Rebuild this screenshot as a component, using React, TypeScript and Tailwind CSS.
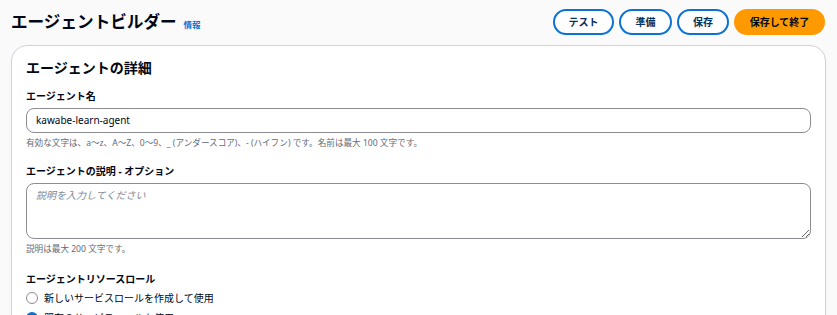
import React from "react";

export default function App() {
  return (
    <div
      className="w-[837px] h-[315px] overflow-hidden bg-[#fafafa] text-[#000716]"
      style={{ fontFamily: '"Noto Sans", "Noto Sans CJK JP", sans-serif' }}
    >
      <div className="flex items-center justify-between pl-[11px] pr-[12px] pt-[6px] h-[38px]">
        <div className="flex items-baseline gap-[7px]">
          <h1 className="text-[16.6px] font-bold leading-[26px]">エージェントビルダー</h1>
          <span className="text-[8.5px] font-bold text-[#0972d3]">情報</span>
        </div>
        <div className="flex items-center gap-[5px]">
          <button className="h-[26px] w-[61px] rounded-full border-2 border-[#0972d3] bg-white text-[10px] font-bold text-[#033160]">テスト</button>
          <button className="h-[26px] w-[53px] rounded-full border-2 border-[#0972d3] bg-white text-[10px] font-bold text-[#033160]">準備</button>
          <button className="h-[26px] w-[52px] rounded-full border-2 border-[#0972d3] bg-white text-[10px] font-bold text-[#033160]">保存</button>
          <button className="h-[26px] w-[91px] rounded-full bg-[#ff9900] text-[10px] font-bold text-[#000716]">保存して終了</button>
        </div>
      </div>
      <div className="mx-[11px] mt-[7px] rounded-[16px] border border-[#d1d5db] bg-white px-[14px] pt-[12px] pb-4 shadow-[0_1px_2px_rgba(0,7,22,0.08)]">
        <h2 className="text-[14px] font-bold leading-[20px]">エージェントの詳細</h2>
        <div className="mt-[10px]">
          <div className="text-[10px] font-bold leading-[16px]">エージェント名</div>
          <div className="mt-[4px] flex h-[25px] items-center rounded-[8px] border border-[#8c8c94] px-[9px] text-[10px]">
            kawabe-learn-agent
          </div>
          <div className="mt-[3px] text-[8.6px] leading-[14px] text-[#5f6b7a]">
            有効な文字は、a〜z、A〜Z、0〜9、_ (アンダースコア)、- (ハイフン) です。名前は最大 100 文字です。
          </div>
        </div>
        <div className="mt-[13px]">
          <div className="text-[10px] font-bold leading-[16px]">エージェントの説明 - オプション</div>
          <textarea
            className="mt-[4px] block h-[56px] w-full resize-y rounded-[8px] border border-[#8c8c94] px-[9px] py-[3px] text-[10px] leading-[16px] italic placeholder:text-[#7d8998] outline-none"
            placeholder="説明を入力してください"
          />
          <div className="mt-[3px] text-[8.6px] leading-[14px] text-[#5f6b7a]">説明は最大 200 文字です。</div>
        </div>
        <div className="mt-[15px]">
          <div className="text-[10px] font-bold leading-[16px]">エージェントリソースロール</div>
          <div className="mt-[3px] flex items-center gap-[6px] text-[10px] leading-[16px]">
            <span className="h-[12px] w-[12px] rounded-full border-[1.5px] border-[#8c8c94] bg-white" />
            <span>新しいサービスロールを作成して使用</span>
          </div>
          <div className="mt-[4px] flex items-center gap-[6px] text-[10px] leading-[16px]">
            <span className="h-[12px] w-[12px] rounded-full border-[4px] border-[#0972d3] bg-white" />
            <span>既存のサービスロールを使用</span>
          </div>
        </div>
      </div>
    </div>
  );
}
